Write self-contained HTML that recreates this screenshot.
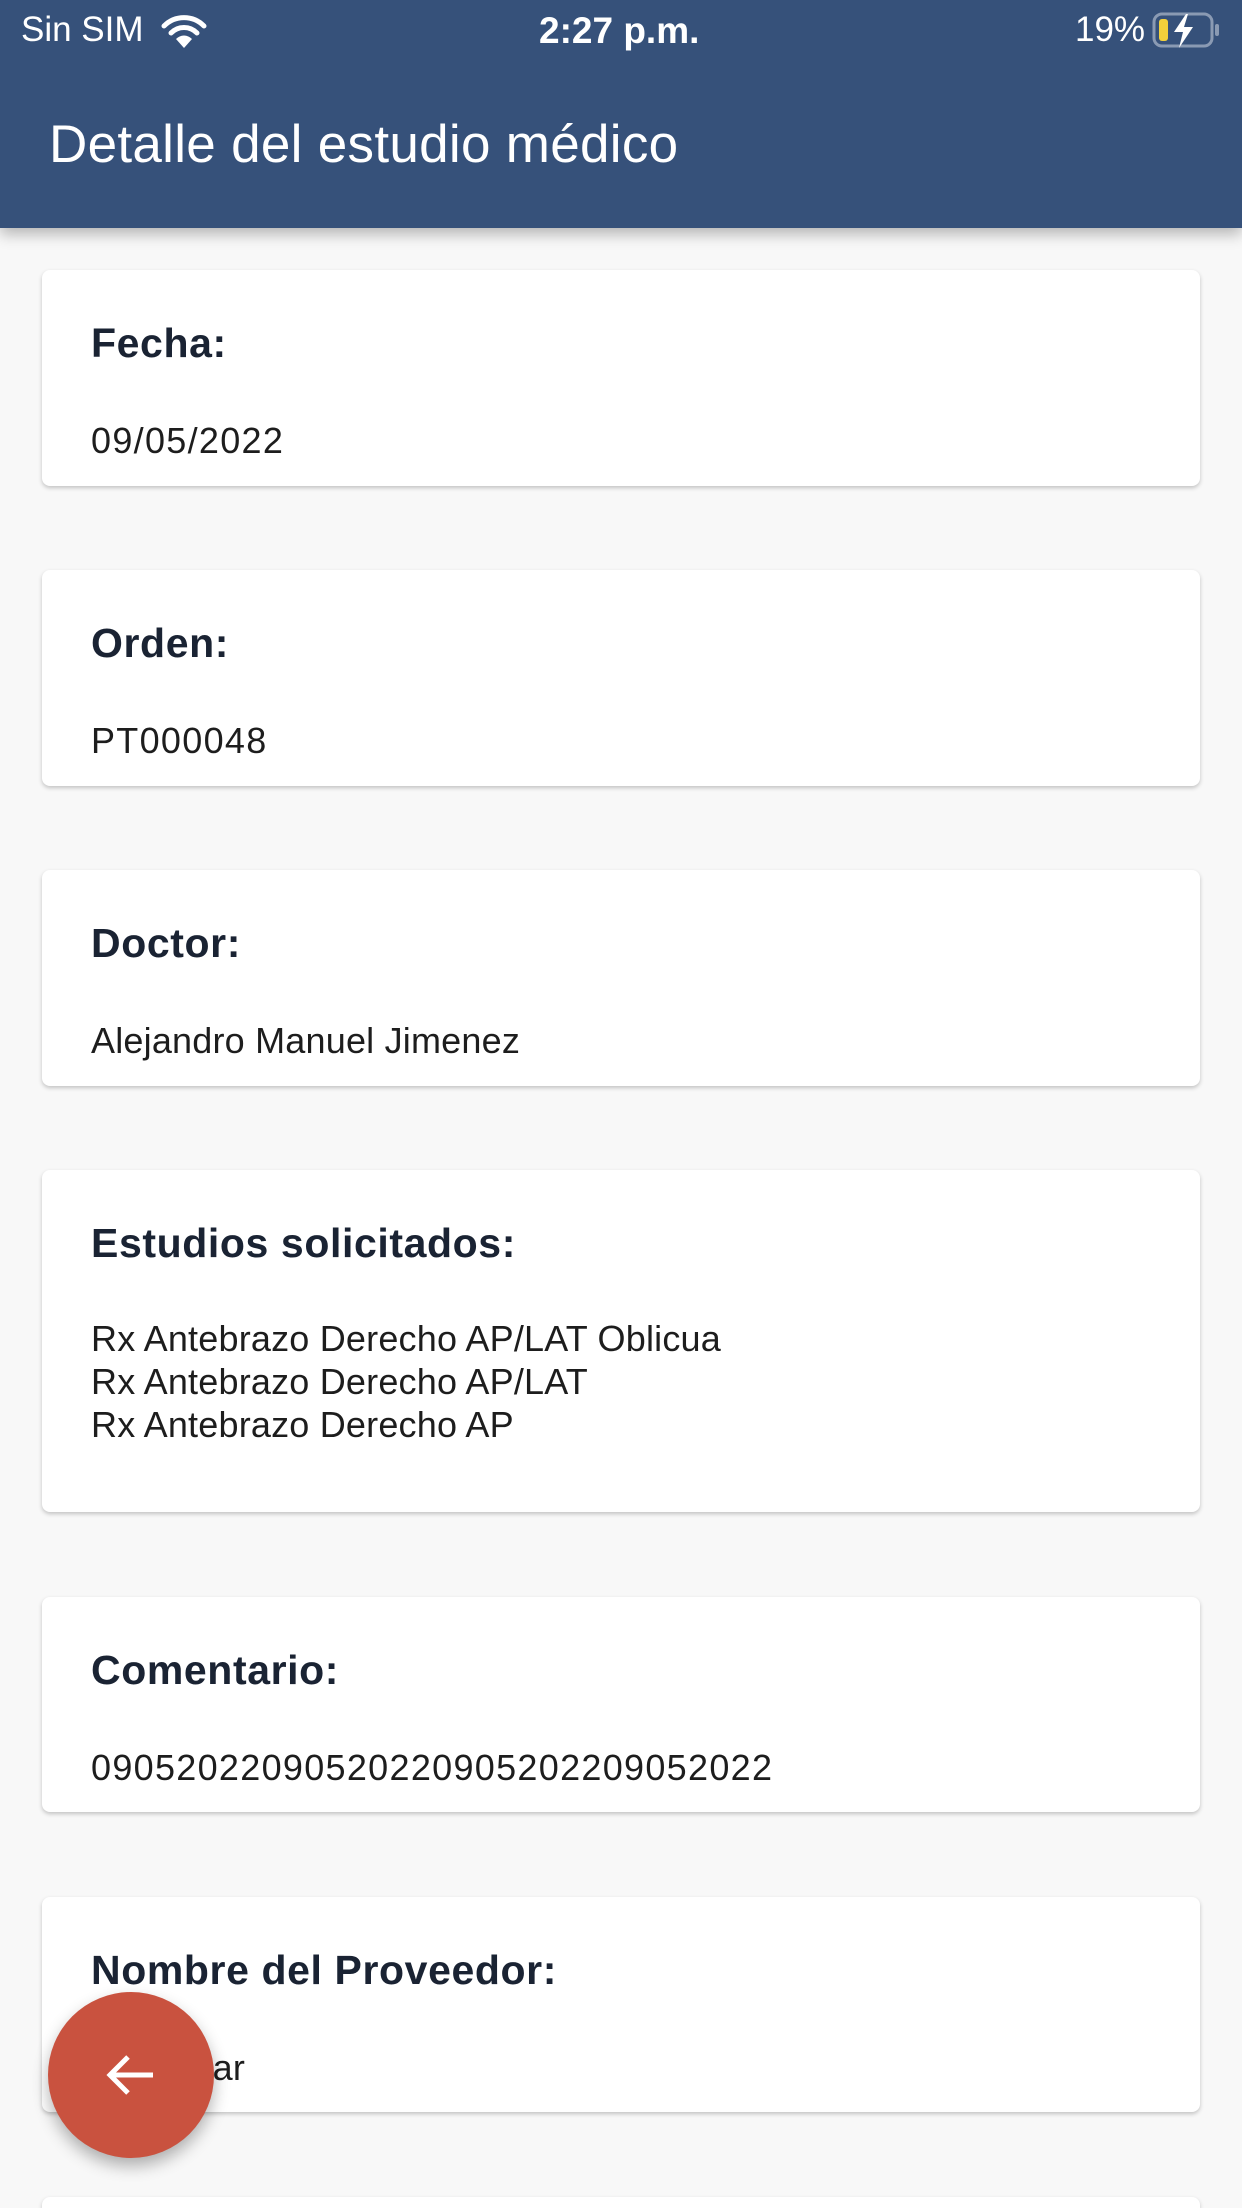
<!DOCTYPE html>
<html style="width:1242px;height:2208px;overflow:hidden"><head><meta charset="utf-8"><style>
*{margin:0;padding:0;box-sizing:border-box}
body{width:1242px;height:2208px;overflow:hidden;background:#f8f8f8;font-family:"Liberation Sans",sans-serif;position:relative}
.bar{position:absolute;left:0;top:0;width:1242px;height:228px;background:#36517a;box-shadow:0 6px 14px rgba(0,0,0,.28);z-index:2;color:#fff}
.st{position:absolute;top:10px;font-size:35px}
.title{position:absolute;left:49px;top:114px;font-size:53px;letter-spacing:.3px}
.card{position:absolute;left:42px;width:1158px;background:#fff;border-radius:8px;box-shadow:0 2px 4px rgba(0,0,0,.22)}
.lb{position:absolute;left:49px;top:50px;font-weight:bold;font-size:41px;color:#1a2333;letter-spacing:.6px}
.v{position:absolute;left:49px;top:149px;font-size:36px;color:#1d1d1d;letter-spacing:.2px;line-height:43px}
.d{letter-spacing:1.3px}
.fab{position:absolute;left:48px;top:1992px;width:166px;height:166px;border-radius:50%;background:#c9523f;box-shadow:0 8px 16px rgba(0,0,0,.3);z-index:3}
</style></head><body>
<div class="bar">
<div class="st" style="left:21px">Sin SIM</div>
<svg style="position:absolute;left:160px;top:14px" width="48" height="36" viewBox="0 0 48 36"><path d="M4 12 A28 28 0 0 1 44 12" stroke="#fff" stroke-width="5" fill="none" stroke-linecap="round"/><path d="M11 19 A18 18 0 0 1 37 19" stroke="#fff" stroke-width="5" fill="none" stroke-linecap="round"/><path d="M24 34 L16 25 A11 11 0 0 1 32 25 Z" fill="#fff"/></svg>
<div class="st" style="left:539px;font-weight:bold;font-size:37px">2:27 p.m.</div>
<div class="st" style="left:1075px">19%</div>
<svg style="position:absolute;left:1152px;top:12px" width="70" height="38" viewBox="0 0 70 38"><rect x="2" y="2" width="58" height="32" rx="8" fill="none" stroke="#8a9ab3" stroke-width="3"/><rect x="63" y="12" width="4" height="12" rx="2" fill="#8a9ab3"/><rect x="7" y="7" width="9" height="22" rx="3" fill="#f2d03b"/><path d="M34 2 L22 20 L31 20 L27 36 L41 15 L32 15 L36 2 Z" fill="#fff"/></svg>
<div class="title">Detalle del estudio médico</div>
</div>

<div class="card" style="top:270px;height:216px"><div class="lb">Fecha:</div><div class="v d">09/05/2022</div></div>
<div class="card" style="top:570px;height:216px"><div class="lb">Orden:</div><div class="v d">PT000048</div></div>
<div class="card" style="top:870px;height:216px"><div class="lb">Doctor:</div><div class="v">Alejandro Manuel Jimenez</div></div>
<div class="card" style="top:1170px;height:342px"><div class="lb">Estudios solicitados:</div><div class="v" style="top:147px">Rx Antebrazo Derecho AP/LAT Oblicua<br>Rx Antebrazo Derecho AP/LAT<br>Rx Antebrazo Derecho AP</div></div>
<div class="card" style="top:1597px;height:215px"><div class="lb">Comentario:</div><div class="v d">09052022090520220905202209052022</div></div>
<div class="card" style="top:1897px;height:215px"><div class="lb">Nombre del Proveedor:</div><div class="v">Particular</div></div>
<div class="card" style="top:2197px;height:11px;border-radius:8px 8px 0 0"></div>

<div class="fab"><svg style="position:absolute;left:53px;top:53px" width="60" height="60" viewBox="0 0 60 60"><path d="M52 30 H10 M27 12 L9 30 L27 48" stroke="#fff" stroke-width="5" fill="none"/></svg></div>
</body></html>
